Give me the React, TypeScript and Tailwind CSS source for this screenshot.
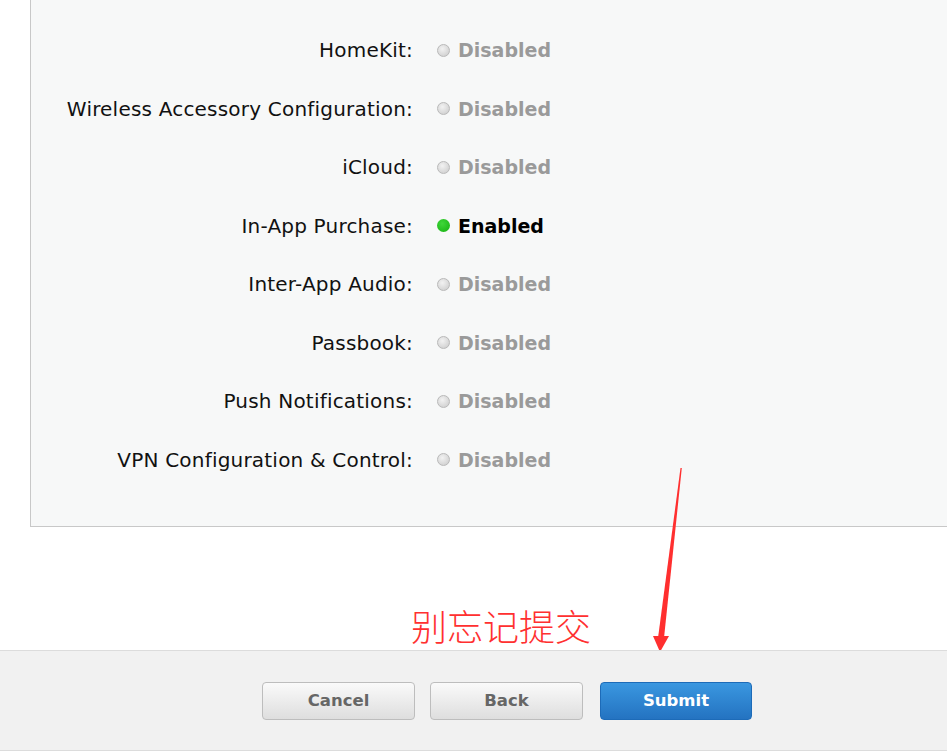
import React from 'react';

const rows = [
  { label: 'HomeKit', enabled: false },
  { label: 'Wireless Accessory Configuration', enabled: false },
  { label: 'iCloud', enabled: false },
  { label: 'In-App Purchase', enabled: true },
  { label: 'Inter-App Audio', enabled: false },
  { label: 'Passbook', enabled: false },
  { label: 'Push Notifications', enabled: false },
  { label: 'VPN Configuration & Control', enabled: false },
];

function StatusDot({ enabled }: { enabled: boolean }) {
  if (enabled) {
    return <span className="inline-block w-[13px] h-[13px] rounded-full bg-[radial-gradient(circle_at_40%_35%,#3fd63a,#14b00f)]" />;
  }
  return (
    <span className="inline-block w-[13px] h-[13px] rounded-full border border-[#b9b9b9] bg-[radial-gradient(circle_at_40%_35%,#f2f2f2,#c9c9c9)]" />
  );
}

export default function App() {
  return (
    <div className="relative w-[947px] h-[751px] bg-white overflow-hidden font-['DejaVu_Sans',sans-serif]">
      {/* Capabilities panel */}
      <div className="ml-[30px] border-l border-b border-[#c8c8c8] bg-[#f7f8f8] pt-[21px] pb-[37px]">
        {rows.map((row) => (
          <div key={row.label} className="flex items-center h-[58.5px]">
            <div className="w-[382px] text-right text-[20px] tracking-[0.2px] text-[#111]">{row.label}:</div>
            <div className="flex items-center ml-[24px] gap-[8px]">
              <StatusDot enabled={row.enabled} />
              <span className={row.enabled ? 'text-[19px] font-bold text-black' : 'text-[19px] font-bold text-[#9a9a9a]'}>
                {row.enabled ? 'Enabled' : 'Disabled'}
              </span>
            </div>
          </div>
        ))}
      </div>

      {/* Annotation */}
      <div className="absolute left-[411px] top-[607px] text-[36px] leading-none font-light text-[#ff3030] font-['Noto_Sans_CJK_SC',sans-serif]">
        别忘记提交
      </div>
      <svg className="absolute left-0 top-0" width="947" height="751" viewBox="0 0 947 751">
        <polygon points="680.5,468 681.8,468 664,638 658,638" fill="#ff2f2f" />
        <polygon points="653,636 669,636 660,652" fill="#ff2f2f" />
      </svg>

      {/* Footer */}
      <div className="absolute left-0 right-0 top-[650px] h-[101px] border-t border-b border-[#dcdcdc] bg-[#f1f1f1] flex justify-center pt-[31px] pl-[67px]">
        <div className="flex gap-[15px] h-[38px]">
          <button className="w-[153px] h-[38px] rounded-[4px] border border-[#bdbdbd] bg-gradient-to-b from-[#fafafa] to-[#dedede] text-[16.5px] font-bold text-[#666]">
            Cancel
          </button>
          <button className="w-[153px] h-[38px] rounded-[4px] border border-[#bdbdbd] bg-gradient-to-b from-[#fafafa] to-[#dedede] text-[16.5px] font-bold text-[#666]">
            Back
          </button>
          <button className="ml-[2px] w-[152px] h-[38px] rounded-[4px] border border-[#1d6bb8] bg-gradient-to-b from-[#3a97e0] to-[#2473c1] text-[16.5px] font-bold text-white">
            Submit
          </button>
        </div>
      </div>
    </div>
  );
}
